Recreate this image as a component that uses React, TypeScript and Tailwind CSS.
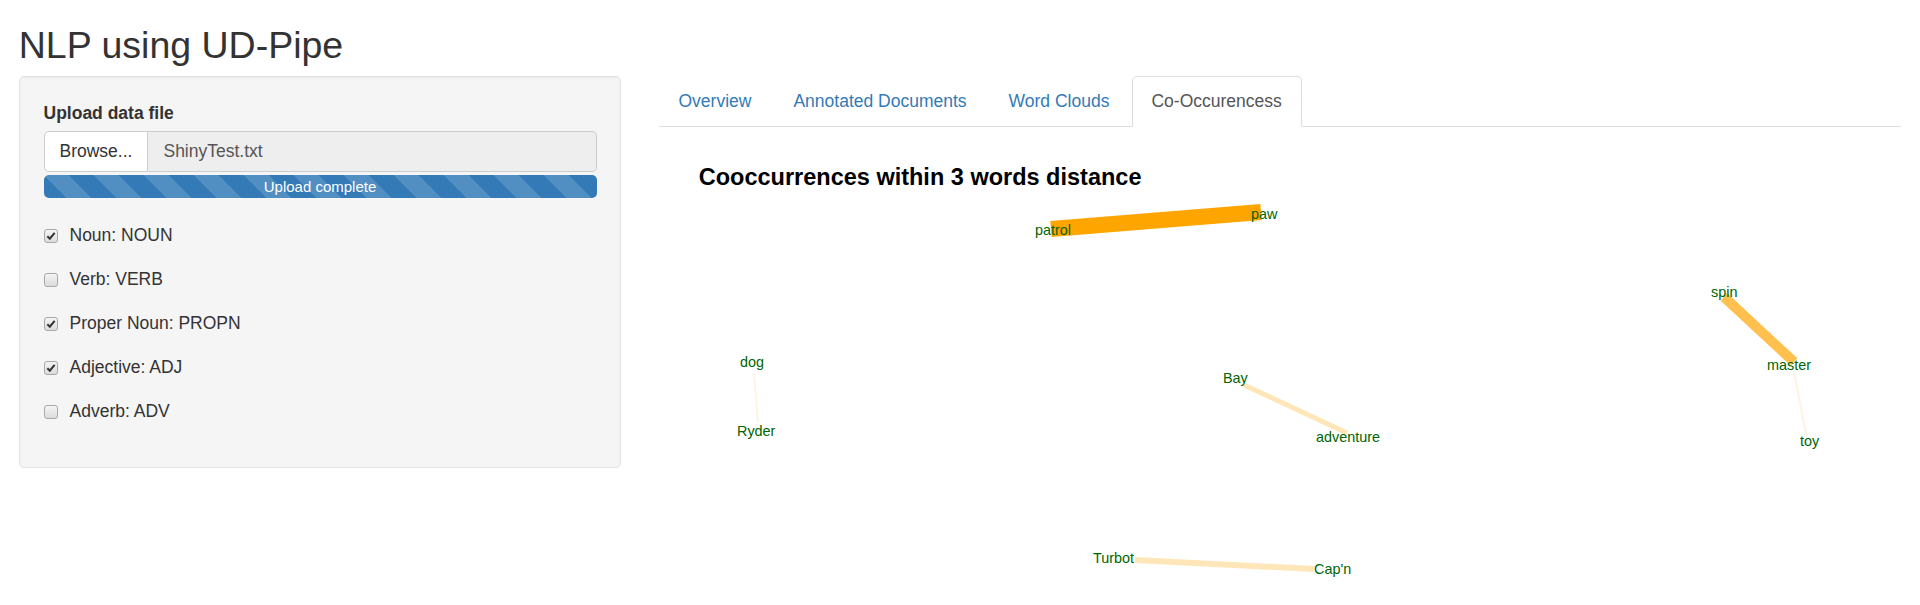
import React from 'react';

const posOptions = [
  { label: 'Noun: NOUN', checked: true },
  { label: 'Verb: VERB', checked: false },
  { label: 'Proper Noun: PROPN', checked: true },
  { label: 'Adjective: ADJ', checked: true },
  { label: 'Adverb: ADV', checked: false },
];

const tabs = ['Overview', 'Annotated Documents', 'Word Clouds', 'Co-Occurencess'];

// graph nodes in page coordinates (text left x, text middle y)
const nodes = [
  { word: 'patrol', x: 1035, y: 229 },
  { word: 'paw', x: 1251, y: 213 },
  { word: 'dog', x: 740, y: 361 },
  { word: 'Ryder', x: 737, y: 430 },
  { word: 'Bay', x: 1223, y: 377 },
  { word: 'adventure', x: 1316, y: 436 },
  { word: 'spin', x: 1711, y: 291 },
  { word: 'master', x: 1767, y: 364 },
  { word: 'toy', x: 1800, y: 440 },
  { word: 'Turbot', x: 1093, y: 557 },
  { word: "Cap'n", x: 1314, y: 568 },
];

const edges = [
  { x1: 1051, y1: 227, x2: 1261, y2: 210, w: 16, color: '#FFA500' },
  { x1: 754, y1: 371, x2: 758, y2: 420, w: 2, color: '#FFF4E3' },
  { x1: 1244, y1: 383, x2: 1347, y2: 431, w: 5, color: '#FFE6B8' },
  { x1: 1724, y1: 295, x2: 1794, y2: 360, w: 10, color: '#FFC04D' },
  { x1: 1794, y1: 370, x2: 1807, y2: 437, w: 2, color: '#FFF4E3' },
  { x1: 1135, y1: 558, x2: 1314, y2: 567, w: 6, color: '#FFE6B8' },
];

const CheckBox: React.FC<{ checked: boolean }> = ({ checked }) => (
  <span className="w-[14px] h-[14px] rounded-[3px] border border-[#a9a9a9] bg-[linear-gradient(#f4f4f4,#dcdcdc)] flex items-center justify-center">
    {checked && (
      <svg width="10" height="10" viewBox="0 0 11 11">
        <path d="M1.5 5.8 L4.2 8.5 L9.5 2" fill="none" stroke="#333" strokeWidth="2.2" />
      </svg>
    )}
  </span>
);

const CooccurrenceGraph: React.FC = () => (
  <svg width="1242" height="419" className="block">
    <g transform="translate(-659,-188)">
      {edges.map((e, i) => (
        <line key={i} x1={e.x1} y1={e.y1} x2={e.x2} y2={e.y2} stroke={e.color} strokeWidth={e.w} />
      ))}
      {nodes.map((n) => (
        <text
          key={n.word}
          x={n.x}
          y={n.y}
          dominantBaseline="middle"
          fill="#006400"
          fontSize="14.4"
          fontFamily="'Liberation Sans', Arial, sans-serif"
        >
          {n.word}
        </text>
      ))}
    </g>
  </svg>
);

export default function App() {
  return (
    <div className="bg-white text-[#333] font-['Liberation_Sans',Arial,sans-serif] text-[17.5px] leading-[25px] px-[18.75px] h-[605px] overflow-hidden">
      <h2 className="text-[37.5px] leading-[1.1] mt-[25px] mb-[10px]">NLP using UD-Pipe</h2>
      <div className="flex mx-[-18.75px]">
        <div className="w-[640px] px-[18.75px] shrink-0">
          <div className="bg-[#f5f5f5] border border-[#e3e3e3] rounded-[5px] shadow-[inset_0_1px_1px_rgba(0,0,0,0.05)] px-[23.75px] pt-[23.75px] pb-[43px]">
            <div className="font-bold">Upload data file</div>
            <div className="flex h-[41px] mt-[5px]">
              <div className="bg-white border border-[#ccc] rounded-l-[5px] px-[15px] flex items-center">Browse...</div>
              <div className="flex-1 bg-[#eee] border border-l-0 border-[#ccc] rounded-r-[5px] px-[15px] flex items-center text-[#555]">
                ShinyTest.txt
              </div>
            </div>
            <div className="mt-[3px] h-[23px] rounded-[5px] bg-[#337ab7] bg-[linear-gradient(45deg,rgba(255,255,255,.15)_25%,transparent_25%,transparent_50%,rgba(255,255,255,.15)_50%,rgba(255,255,255,.15)_75%,transparent_75%,transparent)] bg-[length:50px_50px] text-white text-[15px] leading-[23px] text-center">
              Upload complete
            </div>
            <div className="flex flex-col gap-[19px] mt-[25px]">
              {posOptions.map((o) => (
                <div key={o.label} className="flex items-center gap-[12px] h-[25px]">
                  <CheckBox checked={o.checked} />
                  <span>{o.label}</span>
                </div>
              ))}
            </div>
          </div>
        </div>
        <div className="flex-1 px-[18.75px]">
          <ul className="flex border-b border-[#ddd]">
            {tabs.map((t, i) => {
              const active = i === tabs.length - 1;
              return (
                <li key={t} className="mr-[2.5px] mb-[-1px]">
                  <a
                    className={
                      active
                        ? 'block px-[18.75px] py-[12px] border border-[#ddd] border-b-white bg-white rounded-t-[5px] text-[#555]'
                        : 'block px-[18.75px] py-[12px] border border-transparent rounded-t-[5px] text-[#337ab7]'
                    }
                  >
                    {t}
                  </a>
                </li>
              );
            })}
          </ul>
          <h3 className="font-bold text-[23.5px] leading-[26px] text-black pl-[40px] mt-[37px]">
            Cooccurrences within 3 words distance
          </h3>
          <CooccurrenceGraph />
        </div>
      </div>
    </div>
  );
}
